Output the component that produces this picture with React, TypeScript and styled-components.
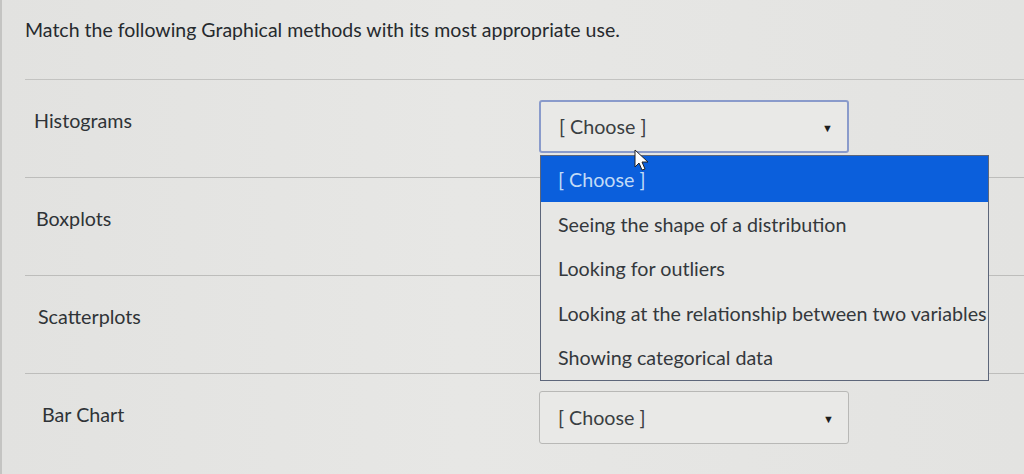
import React from "react";
import styled, { createGlobalStyle } from "styled-components";

const Global = createGlobalStyle`
  html, body { margin: 0; padding: 0; }
  body {
    background: #e4e4e2;
    font-family: Lato, "Open Sans", "Liberation Sans", sans-serif;
    color: #2d3b45;
    overflow: hidden;
  }
`;

const Page = styled.div`
  width: 1024px;
  height: 474px;
  box-sizing: border-box;
  padding-left: 23px;
  border-left: 2px solid #c4c4c2;
  background: linear-gradient(90deg, #e2e2e0 0%, #e7e7e5 45%, #e3e3e1 100%);
  position: relative;
`;

const Header = styled.div`
  box-sizing: border-box;
  height: 80px;
  padding-top: 16px;
  border-bottom: 1px solid #c3c3c1;
`;

const Title = styled.div`
  font-size: 19.5px;
  line-height: 28px;
  color: #262a2e;
`;

const Row = styled.div<{ last?: boolean }>`
  box-sizing: border-box;
  height: 98px;
  padding-top: ${(p) => (p.last ? 17 : 20)}px;
  display: grid;
  grid-template-columns: 514px 310px;
  align-items: start;
  border-bottom: ${(p) => (p.last ? "none" : "1px solid #bdbdbb")};
`;

const Label = styled.div<{ indent: number; shift: number }>`
  margin-top: ${(p) => p.shift}px;
  padding-left: ${(p) => p.indent}px;
  font-size: 19.7px;
  line-height: 28px;
  color: #2f3337;
`;

const SelectWrap = styled.div`
  position: relative;
`;

const Select = styled.div<{ focused?: boolean }>`
  box-sizing: border-box;
  height: 53px;
  display: flex;
  align-items: center;
  justify-content: space-between;
  padding: 0 14px 0 18px;
  background: #e9e9e7;
  border: ${(p) => (p.focused ? "2px solid #8a9bcb" : "1px solid #b8b8b6")};
  border-radius: 3px;
  font-size: 19.7px;
  color: #3a3e42;
`;

const Arrow = styled.span`
  font-size: 11px;
  color: #1e1e1e;
  margin-top: 2px;
`;

const List = styled.div`
  position: absolute;
  top: calc(100% + 2px);
  left: 1px;
  width: 449px;
  box-sizing: border-box;
  border: 1px solid #5d667a;
  background: #e7e7e5;
  z-index: 5;
`;

const Option = styled.div<{ active?: boolean }>`
  height: ${(p) => (p.active ? 46 : 44.5)}px;
  display: flex;
  align-items: center;
  padding-left: 17px;
  font-size: 19.7px;
  white-space: nowrap;
  background: ${(p) => (p.active ? "#0b5fdc" : "transparent")};
  color: ${(p) => (p.active ? "#c2dbf6" : "#34383c")};
`;

const Cursor = styled.svg`
  position: absolute;
  left: 632px;
  top: 149px;
  z-index: 10;
`;

const rows = [
  { label: "Histograms", indent: 9, shift: 7, open: true },
  { label: "Boxplots", indent: 11, shift: 7 },
  { label: "Scatterplots", indent: 13, shift: 7 },
  { label: "Bar Chart", indent: 17, shift: 10 },
];

const options = [
  "[ Choose ]",
  "Seeing the shape of a distribution",
  "Looking for outliers",
  "Looking at the relationship between two variables",
  "Showing categorical data",
];

export default function App() {
  return (
    <>
      <Global />
      <Page>
        <Header>
          <Title>Match the following Graphical methods with its most appropriate use.</Title>
        </Header>
        {rows.map((r, i) => (
          <Row key={r.label} last={i === rows.length - 1}>
            <Label indent={r.indent} shift={r.shift}>{r.label}</Label>
            <SelectWrap>
              {(r.open || i === rows.length - 1) && (
                <Select focused={r.open}>
                  <span>[ Choose ]</span>
                  <Arrow>▼</Arrow>
                </Select>
              )}
              {r.open && (
                <List>
                  {options.map((o, j) => (
                    <Option key={o} active={j === 0}>
                      {o}
                    </Option>
                  ))}
                </List>
              )}
            </SelectWrap>
          </Row>
        ))}
        <Cursor width="16" height="24" viewBox="0 0 16 24">
          <path
            d="M1 1 L1 18 L5 14 L8 21 L11 20 L8 13 L14 13 Z"
            fill="#ffffff"
            stroke="#222"
            strokeWidth="1"
            strokeLinejoin="round"
          />
        </Cursor>
      </Page>
    </>
  );
}
